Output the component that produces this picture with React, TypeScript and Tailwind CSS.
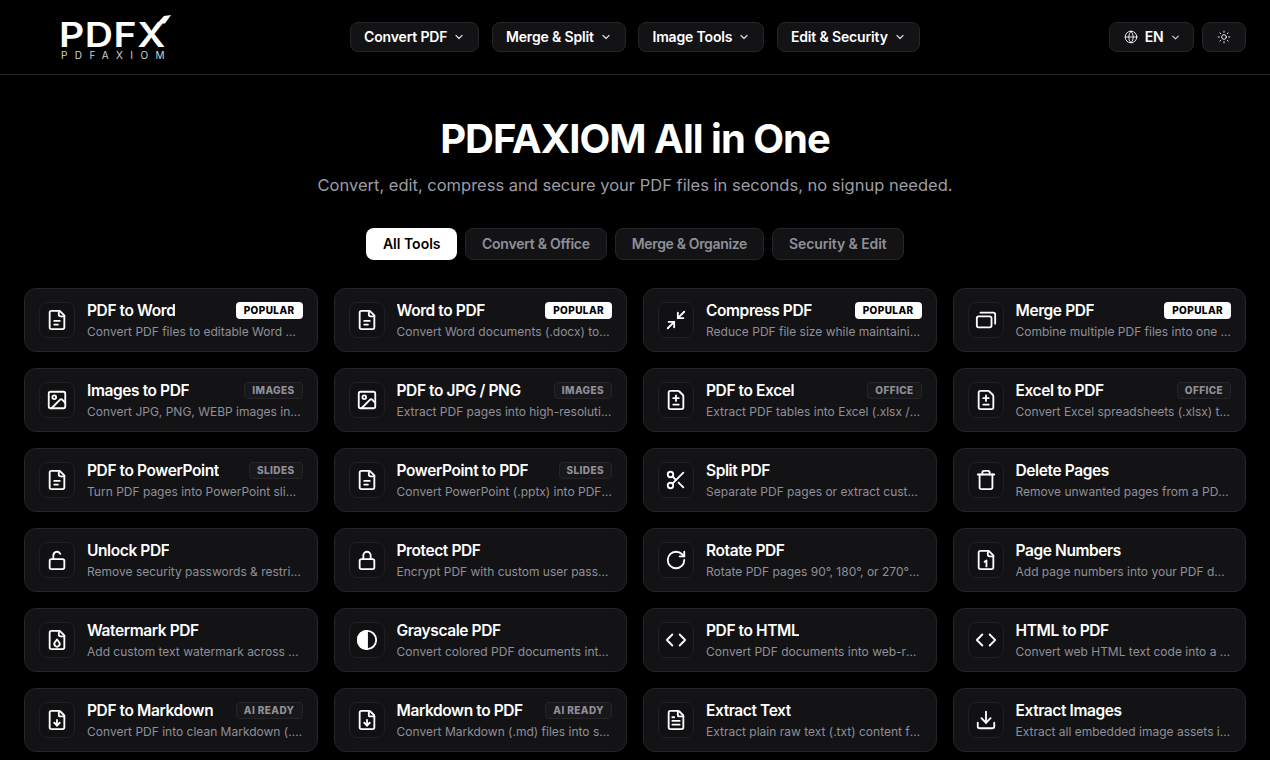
import {
  ChevronDown,
  Code,
  Download,
  FileDiff,
  FileDown,
  FileText,
  Globe,
  Image,
  Minimize2,
  RotateCw,
  Scissors,
  Sun,
  Trash,
} from 'lucide-react';
import type { ReactNode } from 'react';

const FONT = "font-['Inter','Noto_Sans',sans-serif]";
const ICON = 22;

function Glyph({ children }: { children: ReactNode }) {
  return (
    <svg width={ICON} height={ICON} viewBox="0 0 24 24" fill="none" stroke="currentColor" strokeWidth="2" strokeLinecap="round" strokeLinejoin="round">
      {children}
    </svg>
  );
}

function FileShell({ children }: { children: ReactNode }) {
  return (
    <Glyph>
      <path d="M15 2H6a2 2 0 0 0-2 2v16a2 2 0 0 0 2 2h12a2 2 0 0 0 2-2V7Z" />
      <path d="M14 2v4a2 2 0 0 0 2 2h4" />
      {children}
    </Glyph>
  );
}

const wordIcon = (
  <FileShell>
    <path d="M9 13h6" />
    <path d="M9 17h4" />
  </FileShell>
);
const numberIcon = (
  <FileShell>
    <path d="M10.5 14l2-1.5V19" />
  </FileShell>
);
const dropIcon = (
  <FileShell>
    <path d="M12 11.5l2.3 3a2.9 2.9 0 1 1-4.6 0Z" />
  </FileShell>
);
const mergeIcon = (
  <Glyph>
    <rect x="2" y="8" width="16" height="12" rx="2" />
    <path d="M6 4h14a2 2 0 0 1 2 2v10" />
  </Glyph>
);
const lockIcon = (
  <Glyph>
    <rect x="4" y="11" width="16" height="11" rx="2" />
    <path d="M8 11V7a4 4 0 0 1 8 0v4" />
  </Glyph>
);
const unlockIcon = (
  <Glyph>
    <rect x="4" y="11" width="16" height="11" rx="2" />
    <path d="M8 11V7a4 4 0 0 1 7.6-1.7" />
  </Glyph>
);
const contrastIcon = (
  <Glyph>
    <circle cx="12" cy="12" r="10" />
    <path d="M12 2a10 10 0 0 0 0 20Z" fill="currentColor" />
  </Glyph>
);

type Tool = { title: string; desc: string; icon: ReactNode; badge?: string };

const TOOLS: Tool[] = [
  { title: 'PDF to Word', desc: 'Convert PDF files to editable Word documents quickly', icon: wordIcon, badge: 'POPULAR' },
  { title: 'Word to PDF', desc: 'Convert Word documents (.docx) to PDF format', icon: wordIcon, badge: 'POPULAR' },
  { title: 'Compress PDF', desc: 'Reduce PDF file size while maintaining quality', icon: <Minimize2 size={ICON} />, badge: 'POPULAR' },
  { title: 'Merge PDF', desc: 'Combine multiple PDF files into one document', icon: mergeIcon, badge: 'POPULAR' },
  { title: 'Images to PDF', desc: 'Convert JPG, PNG, WEBP images into a PDF file', icon: <Image size={ICON} />, badge: 'IMAGES' },
  { title: 'PDF to JPG / PNG', desc: 'Extract PDF pages into high-resolution images', icon: <Image size={ICON} />, badge: 'IMAGES' },
  { title: 'PDF to Excel', desc: 'Extract PDF tables into Excel (.xlsx / .csv) files', icon: <FileDiff size={ICON} />, badge: 'OFFICE' },
  { title: 'Excel to PDF', desc: 'Convert Excel spreadsheets (.xlsx) to PDF format', icon: <FileDiff size={ICON} />, badge: 'OFFICE' },
  { title: 'PDF to PowerPoint', desc: 'Turn PDF pages into PowerPoint slides you can edit', icon: wordIcon, badge: 'SLIDES' },
  { title: 'PowerPoint to PDF', desc: 'Convert PowerPoint (.pptx) into PDF documents', icon: wordIcon, badge: 'SLIDES' },
  { title: 'Split PDF', desc: 'Separate PDF pages or extract custom page ranges', icon: <Scissors size={ICON} /> },
  { title: 'Delete Pages', desc: 'Remove unwanted pages from a PDF document', icon: <Trash size={ICON} /> },
  { title: 'Unlock PDF', desc: 'Remove security passwords & restrictions from PDF', icon: unlockIcon },
  { title: 'Protect PDF', desc: 'Encrypt PDF with custom user passwords for safety', icon: lockIcon },
  { title: 'Rotate PDF', desc: 'Rotate PDF pages 90°, 180°, or 270° with one click', icon: <RotateCw size={ICON} /> },
  { title: 'Page Numbers', desc: 'Add page numbers into your PDF documents easily', icon: numberIcon },
  { title: 'Watermark PDF', desc: 'Add custom text watermark across all your pages', icon: dropIcon },
  { title: 'Grayscale PDF', desc: 'Convert colored PDF documents into black and white', icon: contrastIcon },
  { title: 'PDF to HTML', desc: 'Convert PDF documents into web-ready HTML pages', icon: <Code size={ICON} /> },
  { title: 'HTML to PDF', desc: 'Convert web HTML text code into a PDF document', icon: <Code size={ICON} /> },
  { title: 'PDF to Markdown', desc: 'Convert PDF into clean Markdown (.md) text files', icon: <FileDown size={ICON} />, badge: 'AI READY' },
  { title: 'Markdown to PDF', desc: 'Convert Markdown (.md) files into styled PDF pages', icon: <FileDown size={ICON} />, badge: 'AI READY' },
  { title: 'Extract Text', desc: 'Extract plain raw text (.txt) content from any PDF', icon: <FileText size={ICON} /> },
  { title: 'Extract Images', desc: 'Extract all embedded image assets inside your PDF', icon: <Download size={ICON} /> },
];

function NavButton({ label }: { label: string }) {
  return (
    <button className="flex h-[30px] items-center gap-1.5 rounded-lg border border-[#26262a] bg-[#131316] px-[13px] text-sm font-semibold tracking-[-0.15px] text-white">
      {label}
      <ChevronDown size={12} strokeWidth={2.5} className="text-[#d4d4d8]" />
    </button>
  );
}

function ToolCard({ tool }: { tool: Tool }) {
  return (
    <div className="flex h-16 min-w-0 items-center gap-3 rounded-xl border border-[#26262a] bg-[#131316] px-3.5">
      <div className="flex h-9 w-9 shrink-0 items-center justify-center rounded-lg border border-[#202024] bg-[#111114] text-white">
        {tool.icon}
      </div>
      <div className="min-w-0 flex-1 pt-0.5">
        <div className="flex h-[22px] items-center justify-between gap-2">
          <span className="truncate text-[15.5px] font-semibold tracking-[-0.4px] text-white">{tool.title}</span>
          {tool.badge === 'POPULAR' ? (
            <span className="mb-px flex h-[17px] shrink-0 items-center rounded bg-white px-2 text-[10px] font-extrabold tracking-[0.4px] text-black">
              {tool.badge}
            </span>
          ) : tool.badge ? (
            <span className="mb-px flex h-[17px] shrink-0 items-center rounded border border-[#26262a] bg-[#18181b] px-[7px] text-[10px] font-extrabold tracking-[0.4px] text-[#8f8f98]">
              {tool.badge}
            </span>
          ) : null}
        </div>
        <p className="truncate text-[12px] leading-[20px] text-[#8f8f98]">{tool.desc}</p>
      </div>
    </div>
  );
}

export default function App() {
  return (
    <div className={`h-[760px] overflow-hidden bg-black ${FONT}`}>
      <header className="relative flex h-[75px] items-start justify-between border-b border-[#26262a] pr-6 pl-[59px]">
        <div className="relative mt-[19px] w-[112px] text-white">
          <div className="origin-left scale-x-[1.15] text-[34px] leading-[31px] font-semibold tracking-[0.5px]">PDFX</div>
          <div className="pl-0.5 text-[10px] leading-[10px] tracking-[7.4px] whitespace-nowrap text-[#d4d4d8]">PDFAXIOM</div>
          <svg className="absolute top-[-4px] left-[92px]" width="22" height="10" viewBox="0 0 22 10" fill="currentColor">
            <polygon points="20,0 14,8.5 6,8.5 13,1" />
          </svg>
        </div>
        <nav className="absolute top-[22px] left-[350px] flex gap-[12.5px]">
          <NavButton label="Convert PDF" />
          <NavButton label="Merge & Split" />
          <NavButton label="Image Tools" />
          <NavButton label="Edit & Security" />
        </nav>
        <div className="mt-[22px] flex gap-2">
          <button className="flex h-[30px] items-center gap-[6.5px] rounded-lg border border-[#26262a] bg-[#131316] pr-3 pl-3.5 text-sm font-semibold tracking-[-0.2px] text-white">
            <Globe size={14} strokeWidth={1.5} />
            EN
            <ChevronDown size={11} strokeWidth={2.5} className="text-[#d4d4d8]" />
          </button>
          <button className="flex h-[30px] w-11 items-center justify-center rounded-lg border border-[#26262a] bg-[#131316] text-white">
            <Sun size={14} strokeWidth={1.5} />
          </button>
        </div>
      </header>

      <section className="flex flex-col items-center pt-[39px]">
        <h1 className="text-[40px] leading-[50px] font-bold tracking-[-1px] text-white">PDFAXIOM All in One</h1>
        <p className="mt-[9px] text-[16.5px] leading-[24px] text-[#9c9ca4]">
          Convert, edit, compress and secure your PDF files in seconds, no signup needed.
        </p>
        <div className="mt-[31px] flex gap-2">
          <button className="flex h-8 items-center rounded-lg bg-white px-[16.5px] text-sm font-semibold text-black">All Tools</button>
          <button className="flex h-8 items-center rounded-lg border border-[#26262a] bg-[#131316] px-4 text-sm font-semibold tracking-[-0.25px] text-[#8f8f98]">Convert &amp; Office</button>
          <button className="flex h-8 items-center rounded-lg border border-[#26262a] bg-[#131316] px-4 text-sm font-semibold tracking-[-0.35px] text-[#8f8f98]">Merge &amp; Organize</button>
          <button className="flex h-8 items-center rounded-lg border border-[#26262a] bg-[#131316] px-4 text-sm font-semibold tracking-[-0.1px] text-[#8f8f98]">Security &amp; Edit</button>
        </div>
      </section>

      <main className="mt-7 grid grid-cols-4 gap-4 px-6">
        {TOOLS.map((tool) => (
          <ToolCard key={tool.title} tool={tool} />
        ))}
      </main>
    </div>
  );
}
